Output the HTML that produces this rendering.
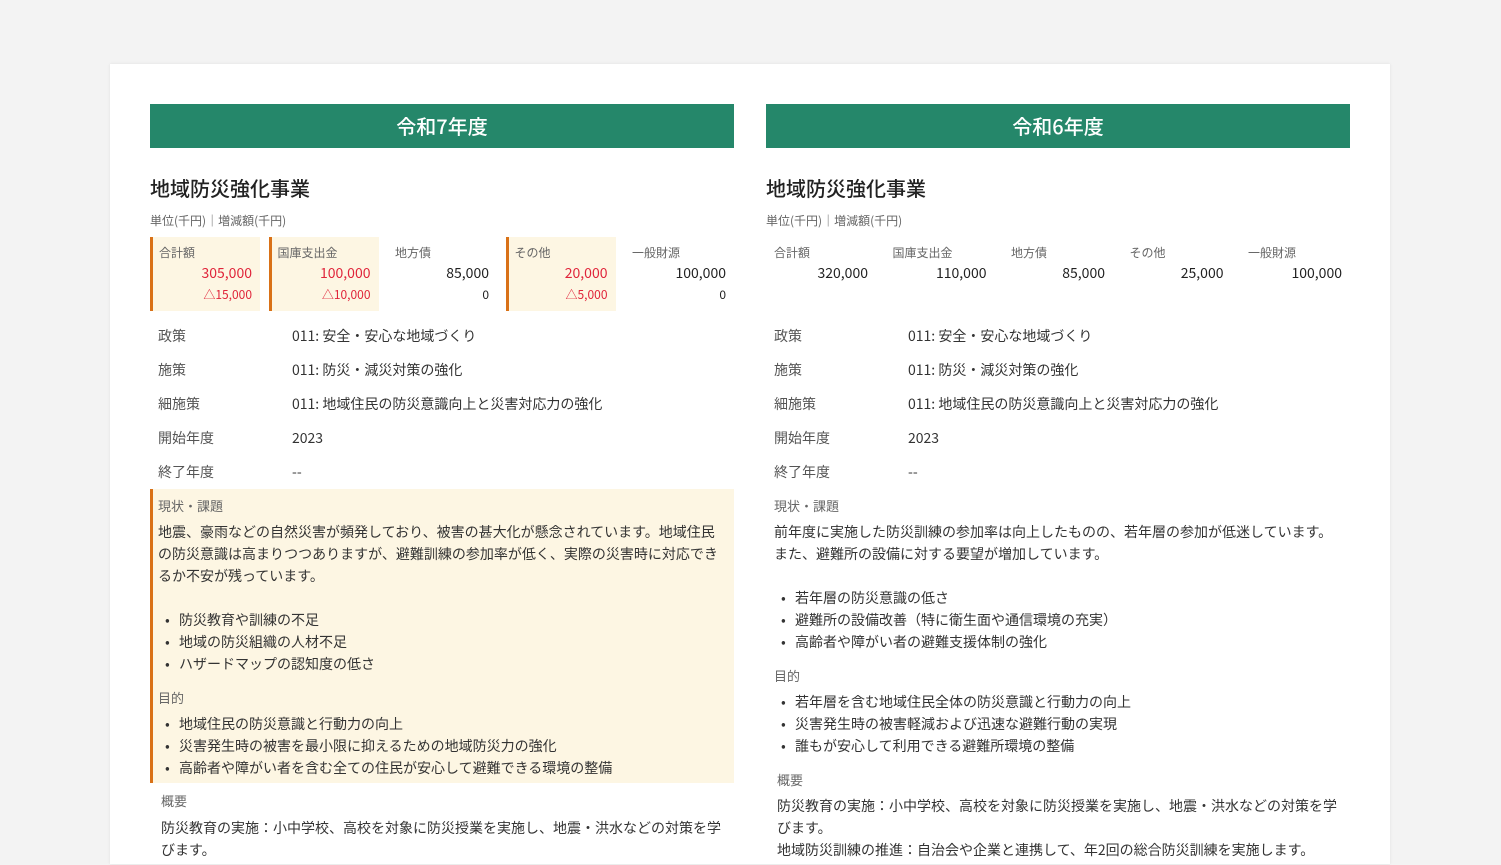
<!DOCTYPE html>
<html><head><meta charset="utf-8"><style>
*{margin:0;padding:0;box-sizing:border-box}
body{width:1501px;height:844px;overflow:hidden;background:#f3f3f3;font-family:"Noto Sans CJK JP","Liberation Sans",sans-serif;color:#333}
.card{position:absolute;left:110px;top:64px;width:1280px;height:800px;background:#fff;box-shadow:0 0 3px rgba(0,0,0,.08)}
.col{position:absolute;top:40px;width:584px}
.hd{height:44px;background:#25876a;color:#fff;font-size:20px;text-align:center;line-height:44px;font-weight:500}
.t{font-size:20px;font-weight:500;margin-top:26px;line-height:28px;color:#222}
.u{font-size:12px;color:#666;margin-top:11px;line-height:16px}
.bud{display:flex;justify-content:space-between;margin-top:8px;height:74px}
.b{width:110px;padding:7px 8px 0 8px;font-size:12px;color:#666;line-height:18px}
.b.h{background:#fdf6e3;border-left:3px solid #d97117;padding-left:6px}
.v{text-align:right;font-size:14px;color:#222;line-height:24px;margin-top:-1px}
.d{text-align:right;font-size:12px;color:#222;line-height:18px;margin-top:1px}
.r{color:#e0243a}
.row{display:flex;height:34px;align-items:center;font-size:14px;margin-left:8px}
.row .l{width:134px;color:#555}
.sec{padding:6px 8px 4px 8px}
.sec.h{background:#fdf6e3;border-left:3px solid #d97117;padding-left:5px}
.lab{font-size:13px;color:#666;line-height:22px}
.p{font-size:14px;line-height:22px;margin-top:4px}
ul{list-style:none;font-size:14px;line-height:22px}
li{padding-left:21px;position:relative}
li:before{content:"•";position:absolute;left:7px}
</style></head><body><div class="card">
<div class="col" style="left:40px">
<div class="hd">令和7年度</div>
<div class="t">地域防災強化事業</div>
<div class="u">単位(千円)｜増減額(千円)</div>
<div class="bud">
<div class="b h">合計額<div class="v r">305,000</div><div class="d r">△15,000</div></div>
<div class="b h">国庫支出金<div class="v r">100,000</div><div class="d r">△10,000</div></div>
<div class="b">地方債<div class="v">85,000</div><div class="d">0</div></div>
<div class="b h">その他<div class="v r">20,000</div><div class="d r">△5,000</div></div>
<div class="b">一般財源<div class="v">100,000</div><div class="d">0</div></div>
</div>
<div style="height:8px"></div>
<div class="row"><div class="l">政策</div>011: 安全・安心な地域づくり</div>
<div class="row"><div class="l">施策</div>011: 防災・減災対策の強化</div>
<div class="row"><div class="l">細施策</div>011: 地域住民の防災意識向上と災害対応力の強化</div>
<div class="row"><div class="l">開始年度</div>2023</div>
<div class="row"><div class="l">終了年度</div>--</div>
<div class="sec h">
<div class="lab">現状・課題</div>
<div class="p">地震、豪雨などの自然災害が頻発しており、被害の甚大化が懸念されています。地域住民の防災意識は高まりつつありますが、避難訓練の参加率が低く、実際の災害時に対応できるか不安が残っています。<br>&nbsp;</div>
<ul><li>防災教育や訓練の不足</li><li>地域の防災組織の人材不足</li><li>ハザードマップの認知度の低さ</li></ul>
<div class="lab" style="margin-top:12px">目的</div>
<ul style="margin-top:4px"><li>地域住民の防災意識と行動力の向上</li><li>災害発生時の被害を最小限に抑えるための地域防災力の強化</li><li>高齢者や障がい者を含む全ての住民が安心して避難できる環境の整備</li></ul>
</div>
<div class="sec" style="padding-left:11px;padding-top:7px">
<div class="lab">概要</div>
<div class="p" style="margin-top:5px">防災教育の実施：小中学校、高校を対象に防災授業を実施し、地震・洪水などの対策を学びます。</div>
</div>
</div>
<div class="col" style="left:656px">
<div class="hd">令和6年度</div>
<div class="t">地域防災強化事業</div>
<div class="u">単位(千円)｜増減額(千円)</div>
<div class="bud">
<div class="b">合計額<div class="v">320,000</div></div>
<div class="b">国庫支出金<div class="v">110,000</div></div>
<div class="b">地方債<div class="v">85,000</div></div>
<div class="b">その他<div class="v">25,000</div></div>
<div class="b">一般財源<div class="v">100,000</div></div>
</div>
<div style="height:8px"></div>
<div class="row"><div class="l">政策</div>011: 安全・安心な地域づくり</div>
<div class="row"><div class="l">施策</div>011: 防災・減災対策の強化</div>
<div class="row"><div class="l">細施策</div>011: 地域住民の防災意識向上と災害対応力の強化</div>
<div class="row"><div class="l">開始年度</div>2023</div>
<div class="row"><div class="l">終了年度</div>--</div>
<div class="sec">
<div class="lab">現状・課題</div>
<div class="p">前年度に実施した防災訓練の参加率は向上したものの、若年層の参加が低迷しています。また、避難所の設備に対する要望が増加しています。<br>&nbsp;</div>
<ul><li>若年層の防災意識の低さ</li><li>避難所の設備改善（特に衛生面や通信環境の充実）</li><li>高齢者や障がい者の避難支援体制の強化</li></ul>
<div class="lab" style="margin-top:12px">目的</div>
<ul style="margin-top:4px"><li>若年層を含む地域住民全体の防災意識と行動力の向上</li><li>災害発生時の被害軽減および迅速な避難行動の実現</li><li>誰もが安心して利用できる避難所環境の整備</li></ul>
<div class="lab" style="margin-top:12px;padding-left:3px">概要</div>
<div class="p" style="padding-left:3px">防災教育の実施：小中学校、高校を対象に防災授業を実施し、地震・洪水などの対策を学びます。<br>地域防災訓練の推進：自治会や企業と連携して、年2回の総合防災訓練を実施します。</div>
</div>
</div>
</div></body></html>
